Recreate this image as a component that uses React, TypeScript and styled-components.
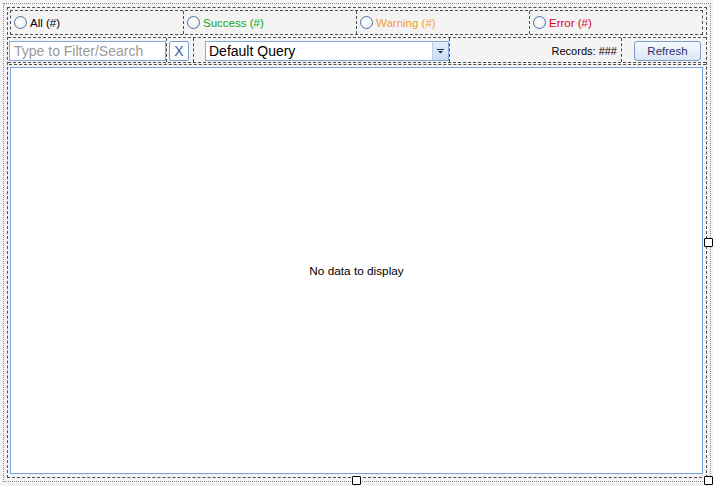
import React from "react";
import styled, { createGlobalStyle } from "styled-components";

const Global = createGlobalStyle`
  html, body { margin: 0; padding: 0; background: #f4f4f4; }
  body { font-family: "Liberation Sans", Arial, sans-serif; }
  * { box-sizing: border-box; }
`;

const Page = styled.div`
  position: relative;
  width: 713px;
  height: 486px;
  padding: 3px 0 0 3px;
  background: #f4f4f4;
  overflow: hidden;
`;

const OuterFrame = styled.div`
  width: 708px;
  height: 479px;
  border: 1px dotted #8c8c8c;
  padding: 3px;
`;

const Table = styled.div`
  width: 100%;
  height: 100%;
  border: 1px dashed #4e4e4e;
  display: flex;
  flex-direction: column;
`;

const StatusPanel = styled.div`
  margin: 2px 3px 0 2px;
  height: 25px;
  border: 1px dashed #4e4e4e;
  display: flex;
`;

const StatusCell = styled.div<{ $last?: boolean }>`
  flex: ${(p) => (p.$last ? "1 1 auto" : "0 0 173px")};
  border-right: ${(p) => (p.$last ? "none" : "1px dashed #4e4e4e")};
  display: flex;
  align-items: center;
  gap: 3px;
  padding-left: 3px;
`;

const Radio = styled.span`
  width: 13px;
  height: 13px;
  border-radius: 50%;
  border: 1px solid #4d75a0;
  background: radial-gradient(circle at 40% 40%, #ffffff 0%, #f0f2f5 55%, #d9dfe7 100%);
  flex: none;
`;

const StatusLabel = styled.span<{ $color: string }>`
  font-size: 11.5px;
  color: ${(p) => p.$color};
  white-space: nowrap;
`;

const ToolRow = styled.div`
  margin-top: 2px;
  height: 26px;
  border-top: 1px dashed #4e4e4e;
  border-bottom: 1px dashed #4e4e4e;
  display: flex;
`;

const Wave = styled.div`
  margin: 1px 0 0 1px;
  border-top: 1px dashed #4e4e4e;
`;

const ToolCell = styled.div<{ $w?: number; $pl?: number; $end?: boolean; $last?: boolean }>`
  flex: ${(p) => (p.$w ? `0 0 ${p.$w}px` : "1 1 auto")};
  border-right: ${(p) => (p.$last ? "none" : "1px dashed #4e4e4e")};
  padding: 3px 0 0 ${(p) => p.$pl ?? 0}px;
  display: flex;
  align-items: flex-start;
  justify-content: ${(p) => (p.$end ? "flex-end" : "flex-start")};
`;

const SearchBox = styled.input`
  width: 157px;
  height: 20px;
  border: 1px solid #84a9dc;
  background: #fff;
  padding: 0 0 0 4px;
  margin: 0;
  font-family: "Liberation Sans", Arial, sans-serif;
  font-size: 14px;
  color: #000;
  outline: none;
  &::placeholder { color: #9a9a9a; }
`;

const ClearButton = styled.button`
  width: 20px;
  height: 20px;
  border: 1px solid #7d9cc8;
  border-radius: 2px;
  background: #fdfdfd;
  color: #3d5fa6;
  font-family: "Liberation Sans", Arial, sans-serif;
  font-size: 14px;
  line-height: 18px;
  padding: 0;
  margin: 0;
  text-align: center;
`;

const Combo = styled.div`
  width: 244px;
  height: 20px;
  border: 1px solid #84a9dc;
  background: #fff;
  display: flex;
  align-items: stretch;
`;

const ComboText = styled.span`
  flex: 1;
  font-size: 14px;
  line-height: 18px;
  padding-left: 3px;
  color: #000;
`;

const ComboDrop = styled.span`
  width: 16px;
  background: linear-gradient(#e6effb, #c9dcf4);
  border-left: 1px solid #b9d0ee;
  display: flex;
  align-items: center;
  justify-content: center;
`;

const RecordsText = styled.span`
  font-size: 11px;
  line-height: 20px;
  color: #000;
  padding-right: 4px;
`;

const RefreshButton = styled.button`
  width: 67px;
  height: 20px;
  border: 1px solid #7f9bc6;
  border-radius: 3px;
  background: linear-gradient(#f6f9fd 0%, #e9f0fa 50%, #d8e4f5 100%);
  color: #2c2f6e;
  font-family: "Liberation Sans", Arial, sans-serif;
  font-size: 11.5px;
  padding: 0;
  margin: 0;
`;

const Grid = styled.div`
  margin: 2px 3px 0 2px;
  height: 407px;
  border: 1px solid #78a2de;
  background: #fff;
  display: flex;
  align-items: center;
  justify-content: center;
`;

const EmptyText = styled.span`
  font-size: 11.8px;
  color: #000;
`;

const Handle = styled.span<{ $x: number; $y: number }>`
  position: absolute;
  left: ${(p) => p.$x}px;
  top: ${(p) => p.$y}px;
  width: 9px;
  height: 9px;
  background: #fff;
  border: 1px solid #000;
  border-radius: 1px;
`;

const statuses = [
  { label: "All (#)", color: "#000000" },
  { label: "Success (#)", color: "#12a812" },
  { label: "Warning (#)", color: "#f0a035" },
  { label: "Error (#)", color: "#e0001c" },
];

export default function App() {
  return (
    <>
      <Global />
      <Page>
        <OuterFrame>
          <Table>
            <StatusPanel>
              {statuses.map((s, i) => (
                <StatusCell key={s.label} $last={i === statuses.length - 1}>
                  <Radio />
                  <StatusLabel $color={s.color}>{s.label}</StatusLabel>
                </StatusCell>
              ))}
            </StatusPanel>
            <ToolRow>
              <ToolCell $w={159} $pl={1}>
                <SearchBox placeholder="Type to Filter/Search" />
              </ToolCell>
              <ToolCell $w={27} $pl={2}>
                <ClearButton>X</ClearButton>
              </ToolCell>
              <ToolCell $w={256} $pl={11}>
                <Combo>
                  <ComboText>Default Query</ComboText>
                  <ComboDrop>
                    <svg width="7" height="5" viewBox="0 0 7 5">
                      <rect x="0" y="0" width="7" height="1" fill="#1c2b5c" />
                      <path d="M1 2 L6 2 L3.5 4.5 Z" fill="#1c2b5c" />
                    </svg>
                  </ComboDrop>
                </Combo>
              </ToolCell>
              <ToolCell $w={172} $end>
                <RecordsText>Records: ###</RecordsText>
              </ToolCell>
              <ToolCell $pl={12} $last>
                <RefreshButton>Refresh</RefreshButton>
              </ToolCell>
            </ToolRow>
            <Wave />
            <Grid>
              <EmptyText>No data to display</EmptyText>
            </Grid>
          </Table>
        </OuterFrame>
        <Handle $x={704} $y={238} />
        <Handle $x={352} $y={476} />
        <Handle $x={704} $y={476} />
      </Page>
    </>
  );
}
